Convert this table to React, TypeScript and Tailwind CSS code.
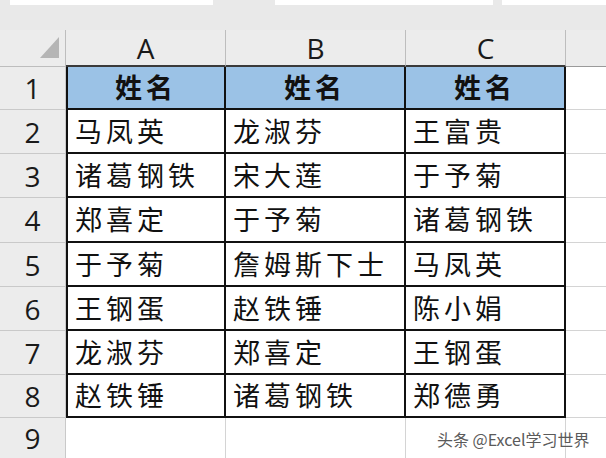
import React from "react"

const cols = ["A", "B", "C"]
const rows = [
  ["姓名", "姓名", "姓名"],
  ["马凤英", "龙淑芬", "王富贵"],
  ["诸葛钢铁", "宋大莲", "于予菊"],
  ["郑喜定", "于予菊", "诸葛钢铁"],
  ["于予菊", "詹姆斯下士", "马凤英"],
  ["王钢蛋", "赵铁锤", "陈小娟"],
  ["龙淑芬", "郑喜定", "王钢蛋"],
  ["赵铁锤", "诸葛钢铁", "郑德勇"],
]

const cjk = { fontFamily: '"Noto Sans CJK SC", "Noto Sans", sans-serif' }
const latin = { fontFamily: '"Open Sans", "Liberation Sans", sans-serif' }

export default function App() {
  return (
    <div className="relative w-[606px] h-[458px] overflow-hidden bg-[#e9e9e9]">
      {/* formula bar strip */}
      <div className="h-[30px] flex items-start">
        <div className="ml-[10px] w-[203px] h-[5px] bg-white" />
        <div className="ml-[62px] w-[218px] h-[5px] bg-white" />
        <div className="ml-[9px] flex-1 h-[5px] bg-white" />
      </div>

      <div className="grid grid-cols-[66px_160px_180px_160px_40px] grid-rows-[37px_43px_44px_44px_45px_44px_44px_44px_43px_40px]">
        {/* corner */}
        <div className="relative bg-[#ececec] border-r border-b border-[#bdbdbd]">
          <div className="absolute left-[0px] bottom-[8px] w-[19px] h-[21px] bg-[#b5b5b5] [clip-path:polygon(100%_0,100%_100%,0_100%)] ml-[40px]" />
        </div>
        {cols.map((c) => (
          <div
            key={c}
            style={latin}
            className="flex items-center justify-center bg-[#ececec] border-r border-[#bdbdbd] border-b-2 border-b-[#3a3a3a] text-[28px] text-[#1a1a1a]"
          >
            {c}
          </div>
        ))}
        <div className="bg-[#ececec] border-b border-[#9a9a9a]" />

        {rows.map((r, i) => (
          <React.Fragment key={i}>
            <div
              style={latin}
              className="flex items-center justify-center bg-[#ececec] border-r border-b border-[#c9c9c9] text-[28px] text-[#1a1a1a]"
            >
              {i + 1}
            </div>
            {r.map((name, j) => (
              <div
                key={j}
                style={cjk}
                className={
                  "flex items-center border-r-2 border-b-2 border-[#111] text-[27px] tracking-[4px] text-[#111] " +
                  (j === 0 ? "border-l-2 " : "") +
                  (i === 0
                    ? "bg-[#9bc2e6] justify-center font-bold"
                    : "bg-white pl-[7px]")
                }
              >
                {name}
              </div>
            ))}
            <div className="bg-white border-b border-[#d4d4d4]" />
          </React.Fragment>
        ))}

        {/* row 9 */}
        <div
          style={latin}
          className="flex items-center justify-center bg-[#ececec] border-r border-[#c9c9c9] text-[28px] text-[#1a1a1a]"
        >
          9
        </div>
        {cols.map((c) => (
          <div key={c} className="bg-white border-r border-[#d4d4d4]" />
        ))}
        <div className="bg-white" />
      </div>

      {/* watermark */}
      <div
        style={cjk}
        className="absolute left-[437px] top-[427px] text-[16px] text-[#5a5a5a] whitespace-nowrap [text-shadow:0_0_2px_#fff]"
      >
        头条 @Excel学习世界
      </div>
    </div>
  )
}
